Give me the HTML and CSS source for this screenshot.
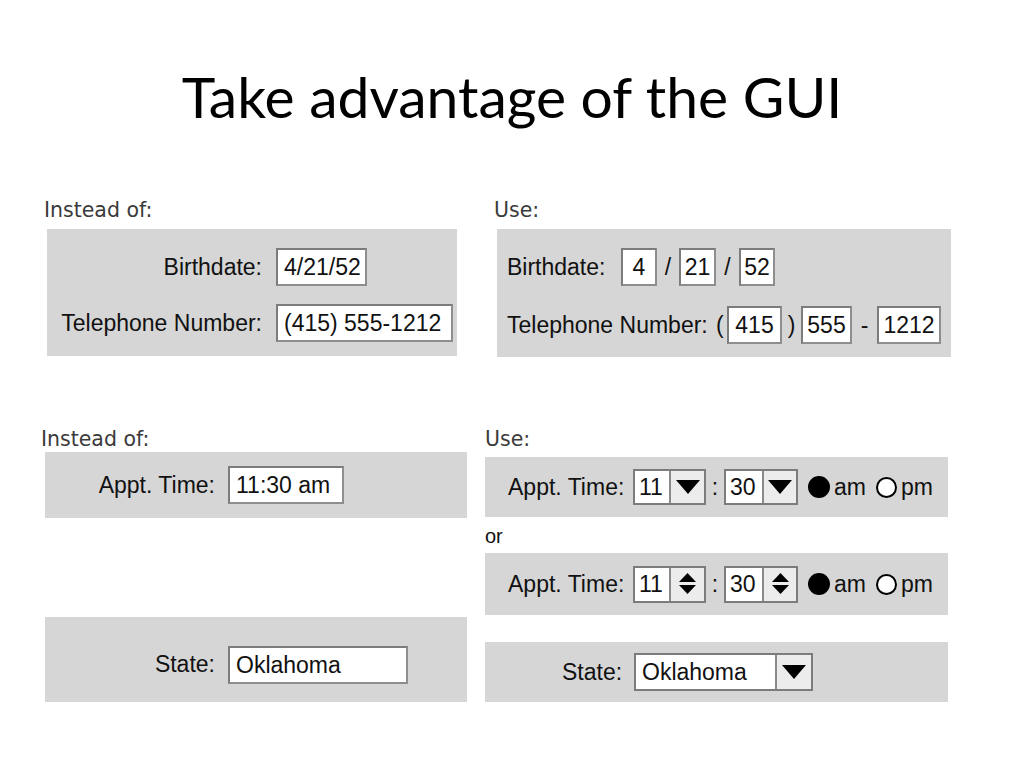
FILE: index.html
```html
<!DOCTYPE html>
<html lang="en">
  <head>
    <meta charset="utf-8" />
    <link rel="stylesheet" href="styles.css">
    <title>Take advantage of the GUI</title>
  </head>

  <body>
    <h1 class="title">Take advantage of the GUI</h1>

    <div class="section section-top">
      <div class="column">
        <div class="caption caption-left">Instead of:</div>
        <div class="panel panel-plain">
          <span class="label">Birthdate:</span>
          <span class="field w-birth">4/21/52</span>
          <span class="label">Telephone Number:</span>
          <span class="field w-phone">(415) 555-1212</span>
        </div>
      </div>

      <div class="column">
        <div class="caption">Use:</div>
        <div class="panel panel-split">
          <div class="row">
            <span class="label lw-birth">Birthdate:</span>
            <span class="field box w-36">4</span>
            <span class="sep s-22">/</span>
            <span class="field box w-37">21</span>
            <span class="sep s-23">/</span>
            <span class="field box w-36">52</span>
          </div>
          <div class="row">
            <span class="label lw-phone">Telephone Number:</span>
            <span class="sep s-12">(</span>
            <span class="field box w-55">415</span>
            <span class="sep s-19">)</span>
            <span class="field box w-51">555</span>
            <span class="sep s-25">-</span>
            <span class="field box w-64">1212</span>
          </div>
        </div>
      </div>
    </div>

    <div class="section section-bottom">
      <div class="column">
        <div class="caption caption-left2">Instead of:</div>
        <div class="panel panel-line panel-appt">
          <span class="label lw-170">Appt. Time:</span>
          <span class="field w-116">11:30 am</span>
        </div>
        <div class="panel panel-line panel-state">
          <span class="label lw-170">State:</span>
          <span class="field w-180">Oklahoma</span>
        </div>
      </div>

      <div class="column">
        <div class="caption caption-use2">Use:</div>
        <div class="panel panel-line panel-time">
          <span class="label lw-125">Appt. Time:</span>
          <div class="select">
            <span class="select-value v-34">11</span>
            <span class="select-btn b-35">
              <svg width="24" height="14" viewBox="0 0 24 14"><polygon points="0,0 24,0 12,14" /></svg>
            </span>
          </div>
          <span class="sep s-18">:</span>
          <div class="select">
            <span class="select-value v-36">30</span>
            <span class="select-btn b-34">
              <svg width="24" height="14" viewBox="0 0 24 14"><polygon points="0,0 24,0 12,14" /></svg>
            </span>
          </div>
          <span class="radio radio-on"></span><span class="radio-text">am</span>
          <span class="radio"></span><span class="radio-text">pm</span>
        </div>

        <div class="or">or</div>

        <div class="panel panel-line panel-spin">
          <span class="label lw-125">Appt. Time:</span>
          <div class="select">
            <span class="select-value v-34">11</span>
            <span class="select-btn b-35">
              <svg width="17" height="24" viewBox="0 0 17 24"><polygon points="0,10 8.5,1 17,10" /><polygon points="0,13 17,13 8.5,22" /></svg>
            </span>
          </div>
          <span class="sep s-18">:</span>
          <div class="select">
            <span class="select-value v-36">30</span>
            <span class="select-btn b-34">
              <svg width="17" height="24" viewBox="0 0 17 24"><polygon points="0,10 8.5,1 17,10" /><polygon points="0,13 17,13 8.5,22" /></svg>
            </span>
          </div>
          <span class="radio radio-on"></span><span class="radio-text">am</span>
          <span class="radio"></span><span class="radio-text">pm</span>
        </div>

        <div class="panel panel-line panel-combo">
          <span class="label lw-72">State:</span>
          <div class="select">
            <span class="select-value v-139">Oklahoma</span>
            <span class="select-btn b-36">
              <svg width="24" height="14" viewBox="0 0 24 14"><polygon points="0,0 24,0 12,14" /></svg>
            </span>
          </div>
        </div>
      </div>
    </div>
  </body>
</html>
```

FILE: styles.css
```css
body {
  margin: 0;
  background: #fff;
  color: #111;
  font-family: "Liberation Sans", Arial, sans-serif;
}

.title {
  margin: 61px 0 0;
  font-family: Lato, "Open Sans", sans-serif;
  font-weight: 400;
  font-size: 57px;
  line-height: 70px;
  text-align: center;
  color: #000;
}

.section {
  display: grid;
}

.section-top {
  margin: 67px 0 0 47px;
  grid-template-columns: 410px 454px;
  column-gap: 40px;
}

.section-bottom {
  margin: 70px 0 0 45px;
  grid-template-columns: 422px 463px;
  column-gap: 18px;
}

.column {
  display: flex;
  flex-direction: column;
}

.caption {
  font-family: "DejaVu Sans", sans-serif;
  font-size: 20.5px;
  line-height: 24px;
  color: #3a3a3a;
  margin: 0 0 7px -3px;
}

.caption-left2 {
  margin: 0 0 1px -4px;
}

.caption-use2 {
  margin: 0 0 6px 0;
}

.panel {
  background: #d6d6d6;
  font-size: 23px;
}

.label {
  white-space: nowrap;
}

.field {
  display: block;
  box-sizing: border-box;
  height: 38px;
  line-height: 34px;
  padding: 0 6px;
  background: #fff;
  border: 2px solid #7c7c7c;
  border-right-color: #8e8e8e;
  border-bottom-color: #8e8e8e;
  white-space: nowrap;
}

.box {
  padding: 0;
  text-align: center;
}

/* left, old style panels */
.panel-plain {
  display: grid;
  grid-template-columns: 215px auto;
  column-gap: 14px;
  row-gap: 18px;
  align-items: center;
  justify-items: start;
  padding: 19px 0 14px;
}

.panel-plain .label {
  justify-self: end;
}

.panel-line {
  display: flex;
  align-items: center;
}

.panel-appt {
  height: 66px;
}

.panel-appt .label,
.panel-state .label {
  text-align: right;
  margin-right: 13px;
}

.panel-state {
  margin-top: 99px;
  height: 85px;
  box-sizing: border-box;
  padding-top: 10px;
}

.lw-170 { width: 170px; }

.w-birth { width: 91px; }
.w-phone { width: 177px; }
.w-116 { width: 116px; }
.w-180 { width: 180px; }

/* right, new style panels */
.panel-split {
  display: flex;
  flex-direction: column;
  gap: 20px;
  padding: 19px 0 13px 10px;
}

.row {
  display: flex;
  align-items: center;
}

.lw-birth { width: 114px; }
.lw-phone { width: 208px; }
.lw-125 { width: 125px; }
.lw-72 { width: 72px; }

.w-36 { width: 36px; }
.w-37 { width: 37px; }
.w-51 { width: 51px; }
.w-55 { width: 55px; }
.w-64 { width: 64px; }

.sep {
  text-align: center;
  flex: none;
}

.s-12 { width: 12px; text-align: left; padding-left: 1px; box-sizing: border-box; }
.s-18 { width: 18px; }
.s-19 { width: 19px; }
.s-22 { width: 22px; }
.s-23 { width: 23px; }
.s-25 { width: 25px; }

.panel-time {
  height: 60px;
  padding-left: 23px;
}

.panel-spin {
  height: 62px;
  padding-left: 23px;
}

.panel-combo {
  margin-top: 27px;
  height: 60px;
  padding-left: 77px;
  box-sizing: border-box;
}

.select {
  display: flex;
  box-sizing: border-box;
  height: 36px;
  border: 2px solid #7c7c7c;
  background: #fff;
}

.panel-spin .select {
  height: 37px;
}

.panel-combo .select {
  height: 38px;
}

.select-value {
  box-sizing: border-box;
  padding-left: 4px;
  line-height: 32px;
}

.panel-combo .select-value {
  padding-left: 6px;
  line-height: 34px;
}

.select-btn {
  display: flex;
  align-items: center;
  justify-content: center;
  box-sizing: border-box;
  background: #ececec;
  border-left: 2px solid #8a8a8a;
}

.select-btn svg {
  fill: #000;
}

.v-34 { width: 34px; }
.v-36 { width: 36px; }
.v-139 { width: 139px; }
.b-34 { width: 34px; }
.b-35 { width: 35px; }
.b-36 { width: 36px; }

.radio {
  box-sizing: border-box;
  width: 21px;
  height: 21px;
  margin-left: 10px;
  border: 2px solid #000;
  border-radius: 50%;
  background: #fff;
}

.radio-on {
  width: 22px;
  height: 22px;
  margin-left: 10px;
  background: #000;
}

.radio-text {
  margin-left: 4px;
}

.or {
  margin: 7px 0 5px;
  font-size: 20px;
  line-height: 24px;
}
```
